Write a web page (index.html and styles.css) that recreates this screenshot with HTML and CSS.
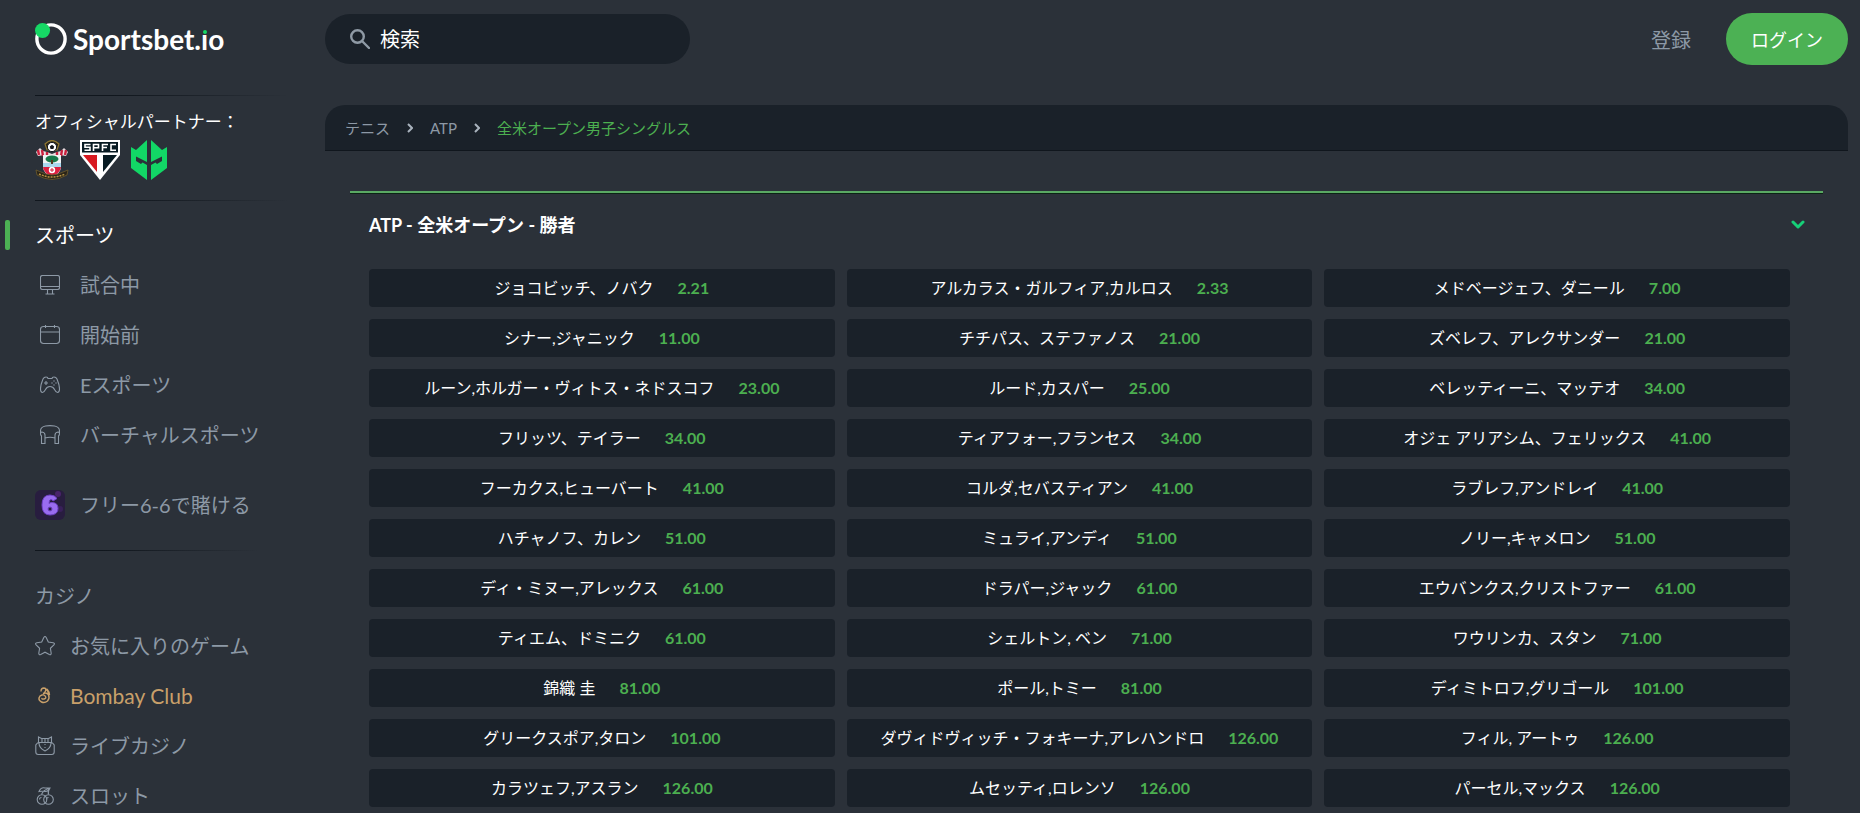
FILE: index.html
```html
<!DOCTYPE html>
<html lang="ja">
<head>
<meta charset="utf-8">
<meta name="viewport" content="width=device-width, initial-scale=1">
<title>Sportsbet.io - 全米オープン男子シングルス</title>
<link rel="stylesheet" href="styles.css">
</head>
<body>
<div class="app">
  <aside class="sidebar">
    <a class="logo" href="#">
      <svg class="logo-mark" viewBox="0 0 34 34" aria-hidden="true"><circle cx="17" cy="17" r="15" fill="none" stroke="#fff" stroke-width="3.600"/><circle cx="8" cy="8" r="8" fill="#16d865"/></svg>
      <span class="logo-text">Sportsbet.<span class="logo-i">ı<span class="logo-dot"></span></span>o</span>
    </a>
    <div class="partners">
      <p class="partners-title">オフィシャルパートナー：</p>
      <div class="partners-list">
        <svg width="34" height="40" viewBox="0 0 34 40" role="img" aria-label="Southampton FC">
          <path d="M10 4Q17-3 24 4L22 10H12Z" fill="#2a2418" stroke="#8f7732" stroke-width="1.200"/>
          <circle cx="17" cy="7" r="4.600" fill="#fff" stroke="#14171c"/><path d="M17 4.800l2.200 1.600-.8 2.500h-2.800l-.8-2.500z" fill="#14171c"/>
          <path d="M1 12l4-4 3 3 4 1 5 2 5-2 4-1 3-3 4 4-2 4-6-1v2H9v-2l-6 1z" fill="#eadfe2"/>
          <path d="M3 10l1 5M7 10l1 6M12 12v4M22 12v4M27 10l-1 6M31 10l-1 5" stroke="#c8203d" stroke-width="2.400"/>
          <path d="M8 15h18v11q0 8-9 10-9-2-9-10z" fill="#f1f3f4"/>
          <path d="M8 26h18v1q-1 7-9 9-8-2-9-9z" fill="#dc2141"/><path d="M8 23h18v4H8z" fill="#a9d8ef"/>
          <ellipse cx="17" cy="19" rx="6.500" ry="3.500" fill="#16794a"/><path d="M17 20v4" stroke="#533a20" stroke-width="2"/>
          <circle cx="17" cy="30" r="3.200" fill="#fff"/><path d="M17 28v4M15 30h4" stroke="#d3203c"/>
          <path d="M1 30l5 2q11 6 22 0l5-2-1 5q-15 9-30 0z" fill="#2a2418" stroke="#6f5c2c" stroke-width=".8"/><path d="M4 34q13 6 26 0" fill="none" stroke="#b89442" stroke-width="1.500" stroke-dasharray="2 1"/>
        </svg>
        <svg width="40" height="40" viewBox="0 0 40 40" role="img" aria-label="SPFC">
          <path d="M0 0h40v15L20 40 0 15z" fill="#fff"/><path d="M2 2h36v10.500H2z" fill="#071a22"/>
          <path d="M3 15h14v17z" fill="#d71920"/><path d="M23 15h14L23 32z" fill="#071a22"/>
          <g fill="none" stroke="#fff" stroke-width="1.600"><path d="M10.500 4.500H5v2.700h5v3H4.500M13.500 11V4.500h5v3.300h-5M22.500 11V4.500h5.500M22.500 7.500h4.500M36 4.500h-5v5.700h5"/></g>
        </svg>
        <svg width="36" height="40" viewBox="0 0 36 40" role="img" aria-label="Partner">
          <path d="M16 0v22L5 16.500v4.500l5 3 1.500-1.500L16 25v15L0 28V7l5 3z" fill="#12d766"/>
          <path d="M20 0v22l11-5.500V21l-5 3-1.500-1.500L20 25v15l16-12V7l-5 3z" fill="#12d766"/>
        </svg>
      </div>
    </div>
    <nav class="menu" aria-label="スポーツ">
      <a class="menu-head is-active" href="#">スポーツ</a>
      <a class="menu-item" href="#"><svg class="icon" viewBox="0 0 20 20"><rect x=".5" y=".5" width="19" height="14" rx="2"/><path d="M.5 11.500h19M7.500 14.500v4.500M12.500 14.500v4.500M5.500 19h9"/></svg>試合中</a>
      <a class="menu-item" href="#"><svg class="icon" viewBox="0 0 20 20"><rect x=".5" y="1.500" width="19" height="17" rx="3"/><path d="M.5 7h19M5.500 0v3M14.500 0v3"/></svg>開始前</a>
      <a class="menu-item" href="#"><svg class="icon" viewBox="0 0 20 20"><path d="M3 4Q4 2 6 2q2 0 2 1.500h4Q12 2 14 2q2 0 3 2 2.500 6 2.500 10 0 3.500-2 3.500-1.500 0-3-3T10 11.500t-4.500 3-3 3q-2 0-2-3.500Q.5 10 3 4zM6 6v4M4 8h4"/><path d="M14 5.500v1M14 9.500v1M11.500 8h1M15.500 8h1" stroke-width="1.500"/></svg>Eスポーツ</a>
      <a class="menu-item" href="#"><svg class="icon" viewBox="0 0 20 20"><path d="M.5 9V6q0-4 5-5 4.500-.8 9 0 5 1 5 5v3M.5 8.500q0-1.500 1.500-1.500 3 .5 3 3v8.500H1.500V11Q.5 10 .5 8.500zM19.500 8.500Q19.500 7 18 7q-3 .5-3 3v8.500h3.500V11q1-1 1-2.500zM5 13q5-1.500 10 0"/></svg>バーチャルスポーツ</a>
      <a class="menu-item menu-promo" href="#"><svg class="promo-icon" viewBox="0 0 30 30" aria-hidden="true"><rect width="30" height="30" rx="6" fill="#281d3f"/><circle cx="23" cy="4" r="3" fill="#49246b"/><circle cx="25" cy="19" r="3" fill="#39205a"/><path d="M22 8.500Q20 5 15 5 7 5 7 15t8 10q8 0 8-6.500 0-6-6-6-2 0-3 1 0-4 2-4 1.500 0 2 1.500zM15 17q2 0 2 2t-2 2-2-2 2-2z" fill="#9a6cf0" stroke="#7042c6"/></svg>フリー6-6で賭ける</a>
    </nav>
    <nav class="menu menu-casino" aria-label="カジノ">
      <a class="menu-head" href="#">カジノ</a>
      <a class="menu-item" href="#"><svg class="icon" viewBox="0 0 20 20"><path d="M8.800 1.500q1.200-2 2.400 0L13.300 6l4.900.7q2 .6.700 2.100l-3.500 3.500.8 4.900q0 2-1.900 1.300L10 16.200l-4.300 2.300q-1.900.7-1.900-1.300l.8-4.900-3.500-3.500q-1.300-1.500.7-2.100L6.700 6z"/></svg>お気に入りのゲーム</a>
      <a class="menu-item menu-gold" href="#"><svg class="icon" viewBox="0 0 20 20"><path d="M6 5.500Q6 2 9 2q2.500.5 1.500 3T8 7.500q4-1.500 5.500 1.500t-1 6q-3 2.500-6 1T4 12t3-3 3.500 1.500T9 13t-2-1M10 2q4 3 4 9M12 3q2.500 3 2.500 6" stroke-width="1.400"/></svg>Bombay Club</a>
      <a class="menu-item" href="#"><svg class="icon" viewBox="0 0 20 20"><path d="M4 7H2.500L.8 9v7q0 2.500 2.500 2.500h13.400q2.500 0 2.500-2.500V9l-1.700-2H16M3.500 1l3 1.500h7l3-1.500v5.500h-13zM4 7q0 5 6 8 6-3 6-8M7 3v3M10 3v3M13 3v3M10 8v1M10 11v1"/></svg>ライブカジノ</a>
      <a class="menu-item" href="#"><svg class="icon" viewBox="0 0 20 20"><circle cx="7" cy="13.500" r="4.800"/><circle cx="13.500" cy="13.500" r="4.800"/><path d="M6.500 8.500Q8 4 15 2M13.500 8.500q-1-3 1.500-6.500M4 5.500q2-4.500 6-3.500l5 0q-2 4-5 3.500T4 5.500zM4.500 13.500q0-2 2-2M11.500 13.500q0-2 2-2"/></svg>スロット</a>
    </nav>
  </aside>

  <div class="content">
    <header class="topbar">
      <form class="search" role="search">
        <svg class="search-icon" viewBox="0 0 20 20" aria-hidden="true"><circle cx="7.500" cy="7.500" r="6.300"/><path d="M12 12l7 7"/></svg>
        <input class="search-input" type="search" placeholder="検索" aria-label="検索">
      </form>
      <div class="account">
        <a class="register" href="#">登録</a>
        <button class="login" type="button">ログイン</button>
      </div>
    </header>

    <nav class="crumbs" aria-label="パンくず">
      <a href="#">テニス</a>
      <svg class="crumb-sep" viewBox="0 0 6 10" aria-hidden="true"><path d="M1 1l4 4-4 4"/></svg>
      <a href="#">ATP</a>
      <svg class="crumb-sep" viewBox="0 0 6 10" aria-hidden="true"><path d="M1 1l4 4-4 4"/></svg>
      <a class="crumb-current" href="#" aria-current="page">全米オープン男子シングルス</a>
    </nav>

    <main class="market">
      <div class="market-head">
        <h1 class="market-title">ATP - 全米オープン - 勝者</h1>
        <button class="market-toggle" type="button" aria-label="折りたたむ"><svg viewBox="0 0 14 10" aria-hidden="true"><path d="M2 2l5 5 5-5"/></svg></button>
      </div>
      <div class="odds-grid">
        <button class="odd" type="button"><span>ジョコビッチ、ノバク</span><b>2.21</b></button>
        <button class="odd" type="button"><span>アルカラス・ガルフィア,カルロス</span><b>2.33</b></button>
        <button class="odd" type="button"><span>メドベージェフ、ダニール</span><b>7.00</b></button>
        <button class="odd" type="button"><span>シナー,ジャニック</span><b>11.00</b></button>
        <button class="odd" type="button"><span>チチパス、ステファノス</span><b>21.00</b></button>
        <button class="odd" type="button"><span>ズベレフ、アレクサンダー</span><b>21.00</b></button>
        <button class="odd" type="button"><span>ルーン,ホルガー・ヴィトス・ネドスコフ</span><b>23.00</b></button>
        <button class="odd" type="button"><span>ルード,カスパー</span><b>25.00</b></button>
        <button class="odd" type="button"><span>ベレッティーニ、マッテオ</span><b>34.00</b></button>
        <button class="odd" type="button"><span>フリッツ、テイラー</span><b>34.00</b></button>
        <button class="odd" type="button"><span>ティアフォー,フランセス</span><b>34.00</b></button>
        <button class="odd" type="button"><span>オジェ アリアシム、フェリックス</span><b>41.00</b></button>
        <button class="odd" type="button"><span>フーカクス,ヒューバート</span><b>41.00</b></button>
        <button class="odd" type="button"><span>コルダ,セバスティアン</span><b>41.00</b></button>
        <button class="odd" type="button"><span>ラブレフ,アンドレイ</span><b>41.00</b></button>
        <button class="odd" type="button"><span>ハチャノフ、カレン</span><b>51.00</b></button>
        <button class="odd" type="button"><span>ミュライ,アンディ</span><b>51.00</b></button>
        <button class="odd" type="button"><span>ノリー,キャメロン</span><b>51.00</b></button>
        <button class="odd" type="button"><span>ディ・ミヌー,アレックス</span><b>61.00</b></button>
        <button class="odd" type="button"><span>ドラパー,ジャック</span><b>61.00</b></button>
        <button class="odd" type="button"><span>エウバンクス,クリストファー</span><b>61.00</b></button>
        <button class="odd" type="button"><span>ティエム、ドミニク</span><b>61.00</b></button>
        <button class="odd" type="button"><span>シェルトン, ベン</span><b>71.00</b></button>
        <button class="odd" type="button"><span>ワウリンカ、スタン</span><b>71.00</b></button>
        <button class="odd" type="button"><span>錦織 圭</span><b>81.00</b></button>
        <button class="odd" type="button"><span>ポール,トミー</span><b>81.00</b></button>
        <button class="odd" type="button"><span>ディミトロフ,グリゴール</span><b>101.00</b></button>
        <button class="odd" type="button"><span>グリークスポア,タロン</span><b>101.00</b></button>
        <button class="odd" type="button"><span>ダヴィドヴィッチ・フォキーナ,アレハンドロ</span><b>126.00</b></button>
        <button class="odd" type="button"><span>フィル, アートゥ</span><b>126.00</b></button>
        <button class="odd" type="button"><span>カラツェフ,アスラン</span><b>126.00</b></button>
        <button class="odd" type="button"><span>ムセッティ,ロレンソ</span><b>126.00</b></button>
        <button class="odd" type="button"><span>パーセル,マックス</span><b>126.00</b></button>
      </div>
    </main>
  </div>
</div>
</body>
</html>
```
FILE: styles.css
```css
:root {
  --bg: #2b3139;
  --panel: #1a2129;
  --line: #10161d;
  --muted: #8d99a6;
  --green: #4caf50;
  --bright: #16d078;
}

* { box-sizing: border-box; }

body {
  margin: 0;
  background: var(--bg);
  color: #fff;
  font-family: Lato, "Noto Sans CJK JP", sans-serif;
}

a { color: inherit; text-decoration: none; }
button, input { font: inherit; color: inherit; }
button { border: 0; cursor: pointer; }

.app {
  display: grid;
  grid-template-columns: 325px 1fr;
  height: 100vh;
}

.sidebar {
  padding: 0 35px;
  overflow-y: auto;
  scrollbar-width: none;
}

.logo {
  display: flex;
  align-items: center;
  gap: 6px;
  height: 95px;
  padding-bottom: 17px;
}
.logo-mark { width: 32px; height: 32px; }
.logo-text { font-size: 28px; line-height: 32px; font-weight: 700; }
.logo-i { position: relative; }
.logo-dot {
  position: absolute;
  top: 8px;
  left: 50%;
  width: 4px;
  height: 4px;
  margin-left: -2px;
  border-radius: 50%;
  background: #16d865;
}

.partners {
  height: 106px;
  padding-top: 15px;
  background:
    linear-gradient(90deg, var(--line) 30%, transparent) top / 100% 1px no-repeat,
    linear-gradient(90deg, var(--line) 30%, transparent) bottom / 100% 1px no-repeat;
}
.partners-title { margin: 0; font-size: 17px; line-height: 24px; white-space: nowrap; }
.partners-list { display: flex; gap: 11px; padding-top: 6px; }

.menu { padding: 9px 0 20px; font-size: 20px; line-height: 30px; color: var(--muted); white-space: nowrap; }
.menu-head, .menu-item { position: relative; display: flex; align-items: center; height: 50px; }
.is-active { color: #fff; }
.is-active::before {
  content: "";
  position: absolute;
  left: -30px;
  width: 5px;
  height: 30px;
  border-radius: 2px;
  background: #4cb154;
}
.menu-item { gap: 20px; padding-left: 5px; }
.icon { width: 20px; height: 20px; fill: none; stroke: currentColor; stroke-width: 1.1; }
.menu-promo { gap: 15px; margin-top: 20px; padding-left: 0; }
.promo-icon { width: 30px; height: 30px; }
.menu-casino {
  padding-top: 21px;
  background: linear-gradient(90deg, var(--line) 30%, transparent) top left / 88% 1px no-repeat;
}
.menu-casino .menu-item { gap: 15px; padding-left: 0; }
.menu-casino .menu-gold { color: #c9a06a; font-size: 21px; }

.content { padding-right: 12px; overflow-y: auto; scrollbar-width: none; }

.topbar {
  display: flex;
  justify-content: space-between;
  align-items: center;
  height: 78px;
  font-size: 20px;
}
.search {
  display: flex;
  align-items: center;
  gap: 10px;
  width: 365px;
  height: 50px;
  padding: 0 25px;
  border-radius: 25px;
  background: var(--panel);
}
.search-icon { width: 20px; height: 20px; fill: none; stroke: #8f9aa5; stroke-width: 2.4; stroke-linecap: round; }
.search-input { flex: 1; min-width: 0; padding: 0; border: 0; outline: 0; background: none; }
.search-input::placeholder { color: #fff; opacity: 1; }
.account { display: flex; align-items: center; gap: 35px; }
.register { color: var(--muted); }
.login { height: 52px; padding: 0 25px; border-radius: 26px; background: #4cb154; font-size: 18px; }

.crumbs {
  display: flex;
  align-items: center;
  gap: 17px;
  height: 46px;
  margin-top: 27px;
  padding: 0 20px;
  border-bottom: 1px solid var(--line);
  border-radius: 20px 20px 0 0;
  background: var(--panel);
  color: var(--muted);
  font-size: 15px;
}
.crumb-sep { width: 6px; height: 10px; fill: none; stroke: #a9b3bd; stroke-width: 2; }
.crumb-current { color: var(--green); }

.market { margin: 40px 25px 0; border-top: 2px solid #5aa963; box-shadow: inset 0 1px 0 #0b2414; }
.market-head { display: flex; justify-content: space-between; align-items: center; height: 64px; padding: 0 16px 0 19px; }
.market-title { margin: 0; font-size: 18px; line-height: 28px; font-weight: 700; }
.market-toggle { display: flex; padding: 2px; background: none; }
.market-toggle svg { width: 14px; height: 10px; fill: none; stroke: var(--bright); stroke-width: 3; stroke-linecap: round; stroke-linejoin: round; }

.odds-grid {
  display: grid;
  grid-template-columns: repeat(3, 1fr);
  gap: 12px;
  padding: 12px 33px 6px 19px;
}
.odd {
  display: flex;
  justify-content: center;
  align-items: center;
  gap: 24px;
  height: 38px;
  padding: 0 10px;
  border-radius: 4px;
  background: var(--panel);
  font-size: 16px;
  line-height: 24px;
  white-space: nowrap;
}
.odd b { color: var(--green); font-weight: 700; }
```
